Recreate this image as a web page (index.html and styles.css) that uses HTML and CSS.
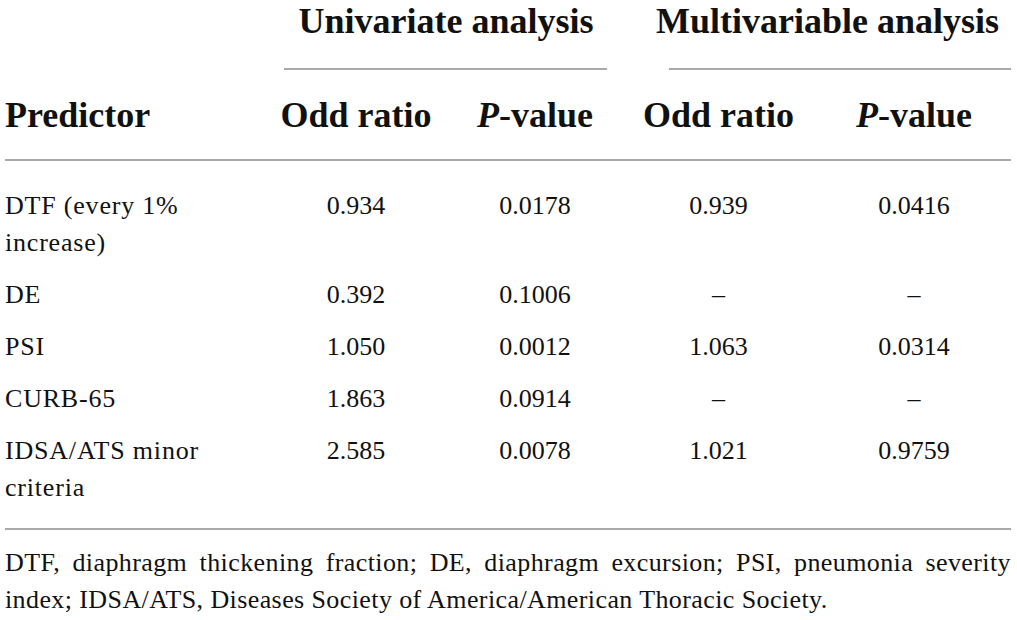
FILE: index.html
```html
<!DOCTYPE html>
<html lang="en">
<head>
    <meta charset="UTF-8">
    <meta name="viewport" content="width=device-width, initial-scale=1.0">
    <title>Predictors table</title>
    <link rel="stylesheet" href="styles.css">
</head>
<body>
    <div class="container">
        <table class="results">
            <colgroup>
                <col class="col-name">
                <col class="col-uni-or">
                <col class="col-uni-p">
                <col class="col-multi-or">
                <col class="col-multi-p">
            </colgroup>
            <thead>
                <tr class="group-row">
                    <th></th>
                    <th colspan="2" class="uni">
                        <div class="group-title">Univariate analysis</div>
                        <div class="group-rule"></div>
                    </th>
                    <th colspan="2" class="multi">
                        <div class="group-title">Multivariable analysis</div>
                        <div class="group-rule"></div>
                    </th>
                </tr>
                <tr class="head-row">
                    <th class="name">Predictor</th>
                    <th>Odd ratio</th>
                    <th><i>P</i>-value</th>
                    <th>Odd ratio</th>
                    <th><i>P</i>-value</th>
                </tr>
            </thead>
            <tbody>
                <tr>
                    <td class="name">DTF (every 1% increase)</td>
                    <td>0.934</td>
                    <td>0.0178</td>
                    <td>0.939</td>
                    <td>0.0416</td>
                </tr>
                <tr>
                    <td class="name">DE</td>
                    <td>0.392</td>
                    <td>0.1006</td>
                    <td>–</td>
                    <td>–</td>
                </tr>
                <tr>
                    <td class="name">PSI</td>
                    <td>1.050</td>
                    <td>0.0012</td>
                    <td>1.063</td>
                    <td>0.0314</td>
                </tr>
                <tr>
                    <td class="name">CURB-65</td>
                    <td>1.863</td>
                    <td>0.0914</td>
                    <td>–</td>
                    <td>–</td>
                </tr>
                <tr>
                    <td class="name">IDSA/ATS minor criteria</td>
                    <td>2.585</td>
                    <td>0.0078</td>
                    <td>1.021</td>
                    <td>0.9759</td>
                </tr>
            </tbody>
        </table>

        <p class="note">
            <span class="note-first">DTF, diaphragm thickening fraction; DE, diaphragm excursion; PSI, pneumonia severity</span>
            <span class="note-last">index; IDSA/ATS, Diseases Society of America/American Thoracic Society.</span>
        </p>
    </div>
</body>
</html>
```

FILE: styles.css
```css
body {
    margin: 0;
    font-family: "Liberation Serif", "Times New Roman", serif;
    color: #111;
    background: white;
}
.container {
    padding: 0 6px 0 5px;
}
.results {
    width: 1006px;
    border-collapse: collapse;
    table-layout: fixed;
}
.col-name { width: 257px; }
.col-uni-or { width: 188px; }
.col-uni-p { width: 170px; }
.col-multi-or { width: 197px; }
.col-multi-p { width: 194px; }

th, td {
    padding: 0;
    text-align: center;
    vertical-align: top;
}
.group-row th {
    font-size: 36px;
    line-height: 42px;
}
.group-title {
    white-space: nowrap;
}
.uni .group-title {
    padding-left: 10px;
}
.multi .group-title {
    padding-left: 24px;
}
.group-rule {
    margin-top: 26px;
    border-bottom: 2px solid #a9a9a9;
}
.uni .group-rule {
    margin-left: 22px;
    margin-right: 13px;
}
.multi .group-rule {
    margin-left: 49px;
}
.head-row th {
    font-size: 36px;
    line-height: 44px;
    padding: 23px 0 22px;
    border-bottom: 2px solid #a9a9a9;
}
.head-row th.name {
    text-align: left;
}
td {
    font-size: 26px;
    line-height: 37px;
    padding: 7px 0 8px;
}
td.name {
    text-align: left;
    letter-spacing: 0.8px;
}
tbody tr:first-child td {
    padding-top: 26px;
}
tbody tr:last-child td {
    padding-bottom: 22px;
    border-bottom: 2px solid #a9a9a9;
}
.note {
    margin: 14px 0 0;
    font-size: 26px;
    line-height: 37px;
    letter-spacing: 0.4px;
}
.note-first {
    display: block;
    text-align: justify;
    text-align-last: justify;
}
.note-last {
    display: block;
}
```
